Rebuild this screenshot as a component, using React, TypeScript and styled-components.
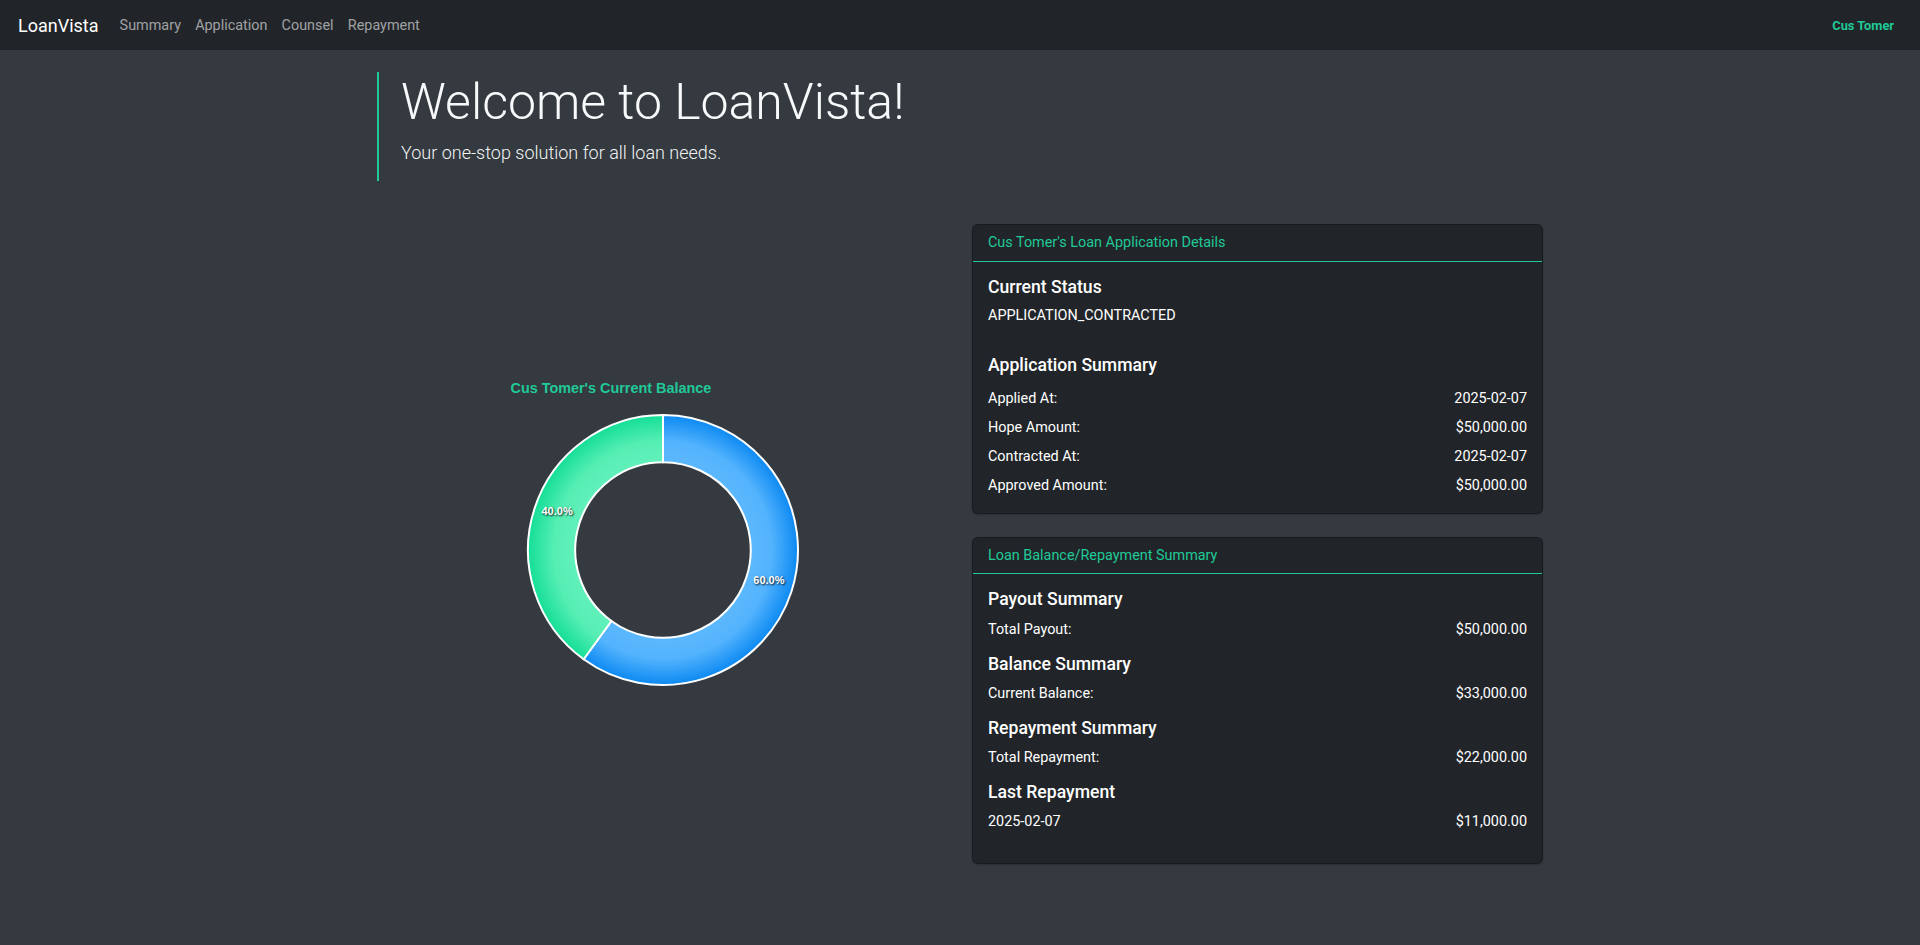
import React from "react";
import styled, { createGlobalStyle } from "styled-components";

const teal = "#20c997";

const GlobalStyle = createGlobalStyle`
  body {
    margin: 0;
    background-color: #343a40;
    color: #fff;
    font-family: Roboto, "Liberation Sans", Arial, sans-serif;
    font-size: 14.4px;
    min-height: 100vh;
  }
  * {
    box-sizing: border-box;
  }
`;

const Navbar = styled.nav`
  display: flex;
  align-items: center;
  height: 50px;
  padding: 0 26px 0 18px;
  background-color: #212529;
`;

const Brand = styled.a`
  font-size: 18px;
  color: #fff;
  text-decoration: none;
  margin-right: 14px;
`;

const NavList = styled.div`
  display: flex;
  align-items: center;
`;

const NavLink = styled.a`
  padding: 0 7.1px;
  font-size: 14.4px;
  color: rgba(255, 255, 255, 0.58);
  text-decoration: none;
`;

const UserName = styled.span`
  margin-left: auto;
  font-size: 12.8px;
  font-weight: 700;
  color: ${teal};
`;

const Container = styled.main`
  max-width: 1166px;
  margin: 22px auto 0;
`;

const Hero = styled.header`
  border-left: 2px solid ${teal};
  padding: 0 0 15px 22px;
`;

const HeroTitle = styled.h1`
  margin: 0 0 7px;
  font-size: 50px;
  font-weight: 300;
  line-height: 1.2;
  color: #f8f9fa;
`;

const HeroLead = styled.p`
  margin: 0;
  font-size: 18px;
  font-weight: 300;
  line-height: 1.5;
  color: #f1f3f5;
`;

const ContentRow = styled.section`
  display: grid;
  grid-template-columns: 1fr 1fr;
  column-gap: 24px;
  margin-top: 43px;
`;

const ChartColumn = styled.div`
  display: flex;
  align-items: center;
  justify-content: center;
`;

const ChartBox = styled.div`
  width: 304px;
  padding-bottom: 15px;
`;

const ChartTitle = styled.div`
  font-family: "Liberation Sans", Arial, sans-serif;
  font-size: 14.4px;
  font-weight: 700;
  line-height: 16px;
  color: ${teal};
  margin-bottom: 16px;
`;

const CardColumn = styled.div`
  display: flex;
  flex-direction: column;
  gap: 23px;
`;

const Card = styled.div`
  background-color: #212529;
  border: 1px solid rgba(0, 0, 0, 0.25);
  border-radius: 6px;
  box-shadow: 0 1px 2px rgba(0, 0, 0, 0.2);
`;

const CardHeader = styled.div`
  padding: 7px 15px;
  line-height: 21.6px;
  font-size: 14.4px;
  color: ${teal};
  border-bottom: 1px solid ${teal};
`;

const CardBody = styled.div<{ $bottom: number }>`
  padding: 15px 15px ${(p) => p.$bottom}px;
`;

const SectionTitle = styled.h5<{ $gap: number }>`
  margin: 0 0 ${(p) => p.$gap}px;
  font-size: 17.6px;
  font-weight: 500;
  line-height: 1.2;
`;

const StatusText = styled.p`
  margin: 0 0 29px;
  line-height: 21px;
`;

const DetailRow = styled.div<{ $gap: number }>`
  display: flex;
  justify-content: space-between;
  line-height: 21px;
  margin-bottom: ${(p) => p.$gap}px;
  &:last-child {
    margin-bottom: ${(p) => (p.$gap > 8 ? p.$gap : 0)}px;
  }
`;

const DonutLabel = styled.text`
  font-family: "Liberation Sans", Arial, sans-serif;
  font-size: 11px;
  font-weight: 700;
  fill: #fff;
  text-shadow: 1px 1px 2px rgba(0, 0, 0, 0.9);
`;

const CX = 152;
const CY = 138;
const R = 135;
const RI = 87.75;

const rad = (deg: number) => (deg * Math.PI) / 180;

function ringPath(start: number, end: number) {
  const large = end - start > 180 ? 1 : 0;
  const p = (r: number, a: number) =>
    `${(CX + r * Math.cos(rad(a))).toFixed(2)} ${(CY + r * Math.sin(rad(a))).toFixed(2)}`;
  return `M ${p(R, start)} A ${R} ${R} 0 ${large} 1 ${p(R, end)} L ${p(RI, end)} A ${RI} ${RI} 0 ${large} 0 ${p(RI, start)} Z`;
}

const segments = [
  { value: 60, fill: "url(#blueGrad)" },
  { value: 40, fill: "url(#greenGrad)" },
];

const BalanceDonut = () => {
  let angle = -90;
  const rm = (R + RI) / 2;
  return (
    <svg width={304} height={276} viewBox="0 0 304 276">
      <defs>
        <radialGradient id="blueGrad" gradientUnits="userSpaceOnUse" cx={CX} cy={CY} r={R + 1}>
          <stop offset="0.64" stopColor="#5cb8fd" />
          <stop offset="0.8" stopColor="#53b3fd" />
          <stop offset="1" stopColor="#0a88f2" />
        </radialGradient>
        <radialGradient id="greenGrad" gradientUnits="userSpaceOnUse" cx={CX} cy={CY} r={R + 1}>
          <stop offset="0.64" stopColor="#62f0bb" />
          <stop offset="0.8" stopColor="#56eeb4" />
          <stop offset="1" stopColor="#12de95" />
        </radialGradient>
      </defs>
      {segments.map((s) => {
        const start = angle;
        const end = angle + (s.value / 100) * 360;
        angle = end;
        const mid = rad((start + end) / 2);
        return (
          <g key={s.value}>
            <path d={ringPath(start, end)} fill={s.fill} stroke="#fff" strokeWidth={2} />
            <DonutLabel
              x={CX + rm * Math.cos(mid)}
              y={CY + rm * Math.sin(mid) - 3}
              textAnchor="middle"
              dominantBaseline="middle"
            >
              {s.value.toFixed(1)}%
            </DonutLabel>
          </g>
        );
      })}
    </svg>
  );
};

const App = () => (
  <>
    <GlobalStyle />
    <Navbar>
      <Brand href="#">LoanVista</Brand>
      <NavList>
        <NavLink href="#">Summary</NavLink>
        <NavLink href="#">Application</NavLink>
        <NavLink href="#">Counsel</NavLink>
        <NavLink href="#">Repayment</NavLink>
      </NavList>
      <UserName>Cus Tomer</UserName>
    </Navbar>
    <Container>
      <Hero>
        <HeroTitle>Welcome to LoanVista!</HeroTitle>
        <HeroLead>Your one-stop solution for all loan needs.</HeroLead>
      </Hero>
      <ContentRow>
        <ChartColumn>
          <ChartBox>
            <ChartTitle>Cus Tomer's Current Balance</ChartTitle>
            <BalanceDonut />
          </ChartBox>
        </ChartColumn>
        <CardColumn>
          <Card>
            <CardHeader>Cus Tomer's Loan Application Details</CardHeader>
            <CardBody $bottom={17}>
              <SectionTitle $gap={7}>Current Status</SectionTitle>
              <StatusText>APPLICATION_CONTRACTED</StatusText>
              <SectionTitle $gap={12}>Application Summary</SectionTitle>
              <DetailRow $gap={8}>
                <span>Applied At:</span>
                <span>2025-02-07</span>
              </DetailRow>
              <DetailRow $gap={8}>
                <span>Hope Amount:</span>
                <span>$50,000.00</span>
              </DetailRow>
              <DetailRow $gap={8}>
                <span>Contracted At:</span>
                <span>2025-02-07</span>
              </DetailRow>
              <DetailRow $gap={8}>
                <span>Approved Amount:</span>
                <span>$50,000.00</span>
              </DetailRow>
            </CardBody>
          </Card>
          <Card>
            <CardHeader>Loan Balance/Repayment Summary</CardHeader>
            <CardBody $bottom={17}>
              <SectionTitle $gap={8}>Payout Summary</SectionTitle>
              <DetailRow $gap={14}>
                <span>Total Payout:</span>
                <span>$50,000.00</span>
              </DetailRow>
              <SectionTitle $gap={8}>Balance Summary</SectionTitle>
              <DetailRow $gap={14}>
                <span>Current Balance:</span>
                <span>$33,000.00</span>
              </DetailRow>
              <SectionTitle $gap={8}>Repayment Summary</SectionTitle>
              <DetailRow $gap={14}>
                <span>Total Repayment:</span>
                <span>$22,000.00</span>
              </DetailRow>
              <SectionTitle $gap={8}>Last Repayment</SectionTitle>
              <DetailRow $gap={14}>
                <span>2025-02-07</span>
                <span>$11,000.00</span>
              </DetailRow>
            </CardBody>
          </Card>
        </CardColumn>
      </ContentRow>
    </Container>
  </>
);

export default App;
